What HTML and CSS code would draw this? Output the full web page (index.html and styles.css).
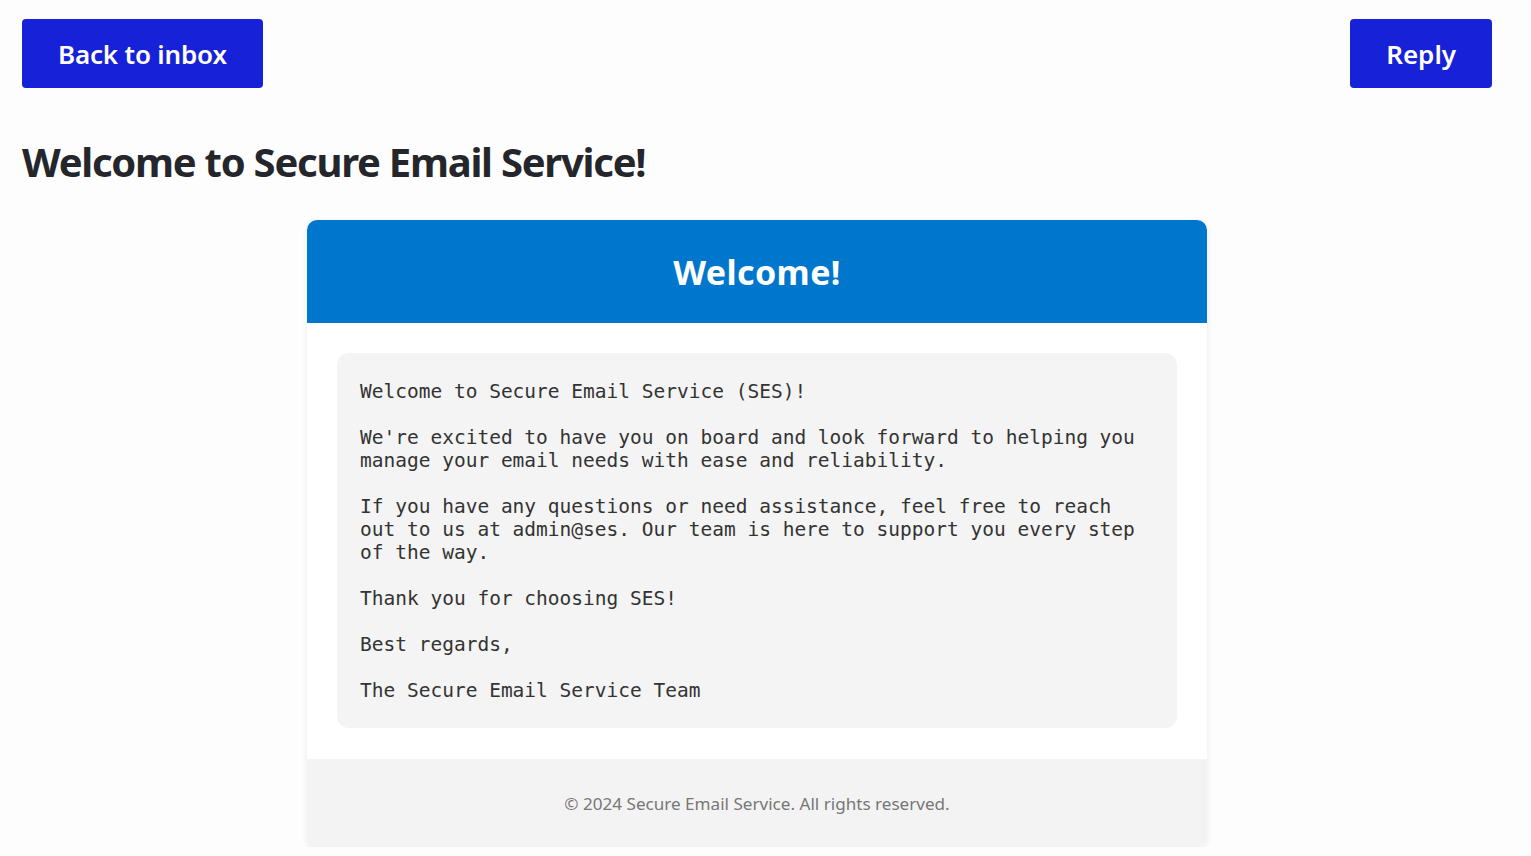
FILE: index.html
```html
<!DOCTYPE html>
<html lang="en">
<head>
<meta charset="utf-8">
<title>Welcome to Secure Email Service!</title>
<link rel="stylesheet" href="styles.css">
</head>
<body>
<div class="page">
  <div class="topbar">
    <a class="btn" href="#">Back to inbox</a>
    <a class="btn" href="#">Reply</a>
  </div>
  <h1 class="subject">Welcome to Secure Email Service!</h1>
  <div class="card">
    <div class="card-head">Welcome!</div>
    <div class="card-body">
<pre class="message">Welcome to Secure Email Service (SES)!

We're excited to have you on board and look forward to helping you
manage your email needs with ease and reliability.

If you have any questions or need assistance, feel free to reach
out to us at admin@ses. Our team is here to support you every step
of the way.

Thank you for choosing SES!

Best regards,

The Secure Email Service Team</pre>
    </div>
    <div class="card-foot">© 2024 Secure Email Service. All rights reserved.</div>
  </div>
</div>
</body>
</html>
```

FILE: styles.css
```css
html, body {
  margin: 0;
  padding: 0;
  background: #fdfdfd;
}

body {
  font-family: "Noto Sans", "Open Sans", sans-serif;
  color: #24262b;
}

.page {
  padding: 19px 39px 0 22px;
}

.topbar {
  display: flex;
  justify-content: space-between;
  align-items: flex-start;
}

.btn {
  display: inline-flex;
  align-items: center;
  justify-content: center;
  height: 69px;
  padding: 0 36px;
  background: #1621d8;
  color: #ffffff;
  text-decoration: none;
  font-size: 26px;
  font-weight: 600;
  border-radius: 4px;
  letter-spacing: -0.18px;
}

.btn + .btn {
  padding: 0 36px;
  letter-spacing: 0;
}

.subject {
  margin: 48px 0 32px 0;
  font-size: 40px;
  line-height: 52px;
  font-weight: 700;
  letter-spacing: -1.25px;
  color: #24262b;
}

.card {
  width: 900px;
  margin: 0 auto;
  background: #ffffff;
  border-radius: 10px;
  box-shadow: 0 2px 6px rgba(0, 0, 0, 0.08);
  overflow: hidden;
}

.card-head {
  height: 103px;
  display: flex;
  align-items: center;
  justify-content: center;
  background: #0077cc;
  color: #ffffff;
  font-size: 34px;
  font-weight: 700;
  letter-spacing: 0.4px;
}

.card-body {
  padding: 30px 30px 31px 30px;
}

.message {
  margin: 0;
  padding: 27px 23px 26px 23px;
  background: #f4f4f4;
  border-radius: 12px;
  font-family: "DejaVu Sans Mono", monospace;
  font-size: 19.5px;
  line-height: 23px;
  color: #333333;
  white-space: pre;
}

.card-foot {
  height: 88px;
  display: flex;
  align-items: center;
  justify-content: center;
  padding-top: 1px;
  box-sizing: border-box;
  background: #f3f3f3;
  color: #777777;
  font-size: 17.1px;
}
```
